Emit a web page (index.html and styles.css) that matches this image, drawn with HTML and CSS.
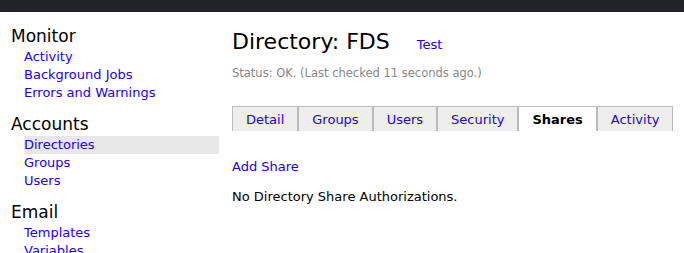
FILE: index.html
```html
<!DOCTYPE html>
<html lang="en">
<head>
    <meta charset="UTF-8">
    <meta name="viewport" content="width=device-width, initial-scale=1.0">
    <title>Directory: FDS</title>
    <link rel="stylesheet" href="styles.css">
</head>
<body>
    <div class="topbar"></div>
    <div class="page">
        <div class="sidebar">
            <div class="section">
                <h3>Monitor</h3>
                <a href="#">Activity</a>
                <a href="#">Background Jobs</a>
                <a href="#">Errors and Warnings</a>
            </div>
            <div class="section">
                <h3>Accounts</h3>
                <a href="#" class="current">Directories</a>
                <a href="#">Groups</a>
                <a href="#">Users</a>
            </div>
            <div class="section">
                <h3>Email</h3>
                <a href="#">Templates</a>
                <a href="#">Variables</a>
            </div>
        </div>
        <div class="main">
            <div class="title">
                <h1>Directory: FDS</h1>
                <a href="#">Test</a>
            </div>
            <div class="status">Status: OK. (Last checked 11 seconds ago.)</div>
            <div class="tabs">
                <a href="#" class="tab">Detail</a>
                <a href="#" class="tab">Groups</a>
                <a href="#" class="tab">Users</a>
                <a href="#" class="tab">Security</a>
                <a href="#" class="tab active">Shares</a>
                <a href="#" class="tab">Activity</a>
            </div>
            <p class="add"><a href="#">Add Share</a></p>
            <p>No Directory Share Authorizations.</p>
        </div>
    </div>
</body>
</html>
```

FILE: styles.css
```css
body {
    margin: 0;
    font-family: "DejaVu Sans", Verdana, sans-serif;
    font-size: 13px;
    color: #000;
    background: #fff;
    overflow: hidden;
}
a {
    color: #2200ee;
    text-decoration: none;
}
.topbar {
    height: 12px;
    background-color: #222326;
}
.page {
    display: flex;
}
.sidebar {
    width: 208px;
    padding: 12px 0 0 11px;
}
.section {
    margin-bottom: 10px;
}
.section h3 {
    margin: 0;
    font-size: 17px;
    font-weight: normal;
    line-height: 24px;
}
.section a {
    display: block;
    line-height: 18px;
    padding-left: 13px;
}
.section a.current {
    background-color: #e8e8e8;
    margin-left: 13px;
    padding-left: 0;
}
.main {
    padding: 15px 0 0 13px;
}
.title {
    display: flex;
    align-items: baseline;
    gap: 27px;
}
.title h1 {
    margin: 0;
    font-size: 22px;
    font-weight: normal;
    line-height: 30px;
}
.status {
    margin-top: 10px;
    font-size: 11.5px;
    line-height: 13px;
    color: #888;
}
.tabs {
    display: flex;
    margin-top: 26px;
}
.tab {
    line-height: 18px;
    padding: 4px 13px 2px;
    background-color: #eee;
    border: 1px solid #bbb;
    border-bottom: none;
}
.tab.active {
    background-color: #fff;
    color: #000;
    font-weight: bold;
}
.main p {
    margin: 0;
    line-height: 18px;
}
.main p.add {
    margin: 27px 0 12px;
}
```
